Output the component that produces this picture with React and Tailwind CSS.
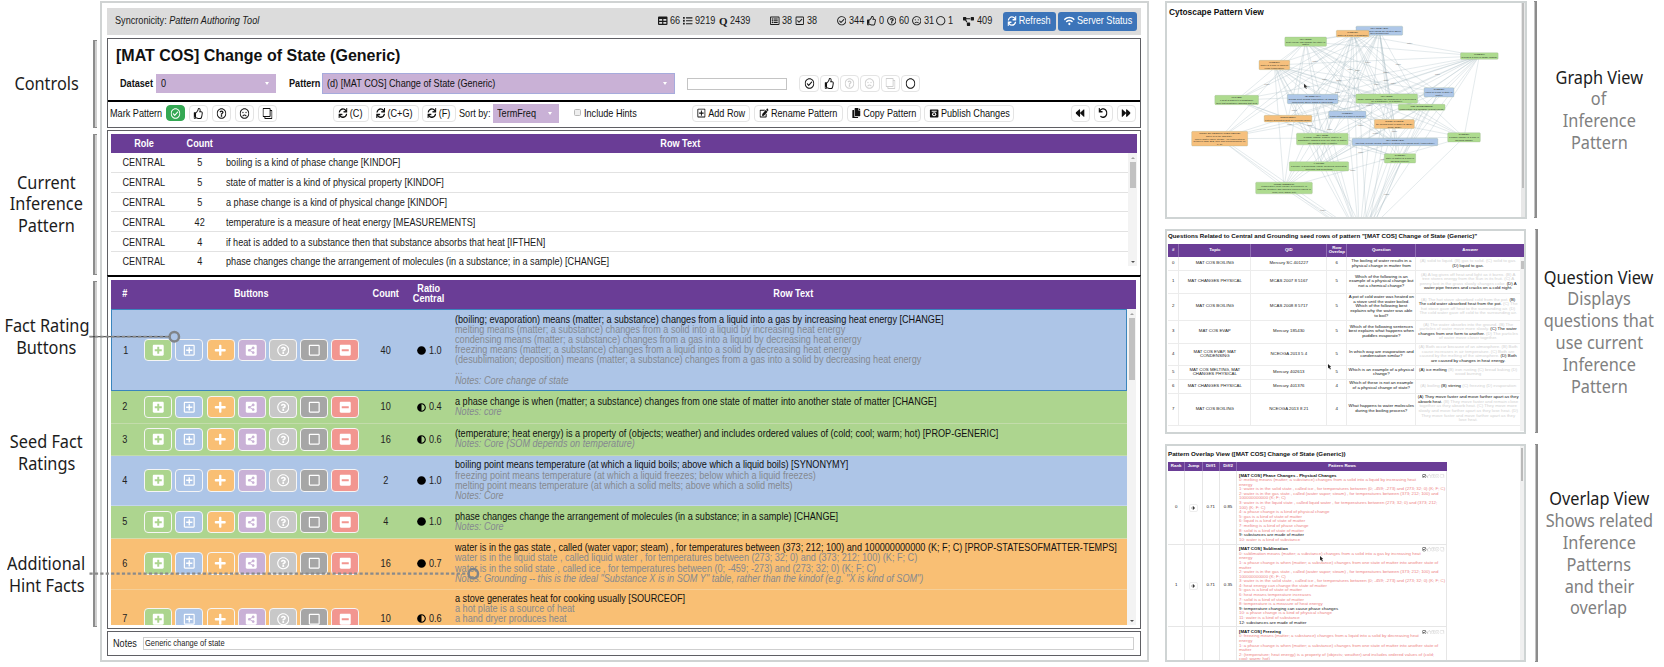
import React from "react";
import {
  FaTable, FaList, FaRegListAlt, FaRegCheckSquare, FaRegCheckCircle, FaRegThumbsUp,
  FaRegQuestionCircle, FaRegFrown, FaRegCircle, FaProjectDiagram, FaSync, FaWifi, FaRegClone,
  FaRegPlusSquare, FaEdit, FaCopy, FaBackward, FaUndo, FaForward, FaPlusSquare, FaPlus,
  FaShareAltSquare, FaRegSquare, FaMinusSquare, FaCircle, FaAdjust, FaArrowRight,
} from "react-icons/fa";

const Clone = () => <FaRegClone className="-scale-x-100" />;

/* condensed text, anchored left (L) or centred (M) */
const L = ({ className = "", children }) => (
  <span className={"inline-block shrink-0 origin-left scale-x-[0.895] whitespace-nowrap " + className}>{children}</span>
);
const M = ({ children }) => (
  <span className="inline-flex shrink-0 origin-center scale-x-[0.895] items-center justify-center gap-[2.5px] whitespace-nowrap">{children}</span>
);

function PublishIcon() {
  return (
    <svg width="10" height="9" viewBox="0 0 18 18" preserveAspectRatio="none">
      <rect x="0" y="1" width="18" height="16" rx="2" fill="#111" />
      <rect x="4" y="3.5" width="10" height="2" fill="#fff" />
      <circle cx="9" cy="10.5" r="4.2" fill="#fff" />
      <circle cx="9" cy="10.5" r="2.2" fill="#111" />
    </svg>
  );
}

/* ---------- side labels ---------- */
function Label({ lines, className = "", light = 99 }) {
  return (
    <div className={"flex flex-col items-center text-[18px] leading-[21.8px] whitespace-nowrap font-['Noto_Sans',sans-serif] " + className}>
      {lines.map((l, i) => (
        <span key={i} className={"origin-center scale-x-[0.905] " + (i >= light ? "text-[#808080]" : "text-[#1c1c1c]")}>{l}</span>
      ))}
    </div>
  );
}

/* ---------- header ---------- */
function Stat({ icon, children, className = "" }) {
  return (
    <span className={"flex items-center gap-[2.5px] shrink-0 " + className}>
      {icon}
      <L>{children}</L>
    </span>
  );
}

function Header() {
  return (
    <div className="flex h-[27px] items-center bg-[#dcdcdc] pl-[8px] pr-[4px] text-[10.2px] text-[#1a1a1a]">
      <span className="w-[543px] shrink-0"><L>Syncronicity: <i>Pattern Authoring Tool</i></L></span>
      <Stat className="w-[25px]" icon={<FaTable className="size-[9.5px]" />}>66</Stat>
      <Stat className="w-[35.5px]" icon={<FaList className="size-[9.5px]" />}>9219</Stat>
      <Stat className="w-[51.5px]" icon={<b className="font-['Liberation_Serif',serif] text-[11px] leading-none">Q</b>}>2439</Stat>
      <Stat className="w-[25px]" icon={<FaRegListAlt className="size-[9.5px]" />}>38</Stat>
      <Stat className="w-[41.5px]" icon={<FaRegCheckSquare className="size-[9.5px]" />}>38</Stat>
      <Stat className="w-[30px]" icon={<FaRegCheckCircle className="size-[9.5px]" />}>344</Stat>
      <Stat className="w-[20px]" icon={<FaRegThumbsUp className="size-[9.5px]" />}>0</Stat>
      <Stat className="w-[25px]" icon={<FaRegQuestionCircle className="size-[9.5px]" />}>60</Stat>
      <Stat className="w-[24.5px]" icon={<FaRegFrown className="size-[9.5px]" />}>31</Stat>
      <Stat className="w-[27px]" icon={<FaRegCircle className="size-[9.5px]" />}>1</Stat>
      <Stat className="w-[39.5px]" icon={<FaProjectDiagram className="size-[11px]" />}>409</Stat>
      <span className="flex h-[19px] w-[53px] shrink-0 items-center justify-center rounded-[3px] bg-[#3c74b9] text-white">
        <M><FaSync className="size-[10px]" />Refresh</M>
      </span>
      <span className="ml-[2.5px] flex h-[19px] w-[78.5px] shrink-0 items-center justify-center rounded-[3px] bg-[#3c74b9] text-white">
        <M><FaWifi className="size-[12px]" />Server Status</M>
      </span>
    </div>
  );
}

/* ---------- controls ---------- */
function Btn({ className = "", children }) {
  return (
    <span className={"flex shrink-0 items-center justify-center rounded-[4px] border border-[#e4e4e4] " + className}>
      <M>{children}</M>
    </span>
  );
}

function Select({ children, className = "" }) {
  return (
    <span className={"flex shrink-0 items-center justify-between bg-[#c9b1d6] " + className}>
      <L>{children}</L>
      <span className="size-0 border-x-[2px] border-t-[3.5px] border-x-transparent border-t-white" />
    </span>
  );
}

function Controls() {
  return (
    <div className="mt-[3px] h-[90px] border border-[#5f5f64] text-[10.2px] text-[#111]">
      <div className="flex h-[34.5px] items-center pl-[8px] text-[17px] font-bold">
        <span className="origin-left scale-x-[0.942]">[MAT COS] Change of State (Generic)</span>
      </div>
      <div className="flex h-[21px] items-center pl-[12px]">
        <b className="w-[36px] shrink-0"><L>Dataset</L></b>
        <Select className="h-[19px] w-[120px] pl-[4.5px] pr-[7px]">0</Select>
        <b className="ml-[12.5px] w-[33.5px] shrink-0"><L>Pattern</L></b>
        <Select className="h-[20.5px] w-[353px] border border-[#a6abdc] pl-[4px] pr-[7.5px]">(d) [MAT COS] Change of State (Generic)</Select>
        <span className="ml-[11.5px] mr-[12.5px] h-[12px] w-[100px] shrink-0 border border-[#c4c4c4]" />
        <span className="flex gap-[1px] text-[11px]">
          <Btn className="h-[17px] w-[19.3px]"><FaRegCheckCircle /></Btn>
          <Btn className="h-[17px] w-[19.3px]"><FaRegThumbsUp /></Btn>
          <Btn className="h-[17px] w-[19.3px] text-[#cfcfcf]"><FaRegQuestionCircle /></Btn>
          <Btn className="h-[17px] w-[19.3px] text-[#cfcfcf]"><FaRegFrown /></Btn>
          <Btn className="h-[17px] w-[19.3px] text-[#cfcfcf]"><Clone /></Btn>
          <Btn className="h-[17px] w-[19.3px]"><FaRegCircle /></Btn>
        </span>
      </div>
      <div className="mt-[5.5px] flex h-[25.5px] items-center border-t-2 border-black pl-[2px]">
        <span className="w-[55.5px] shrink-0"><L>Mark Pattern</L></span>
        <span className="flex shrink-0 gap-[3.2px] text-[11px]">
          <Btn className="h-[16.5px] w-[19.5px] !border-[#34a853] bg-[#34a853] text-white"><FaRegCheckCircle /></Btn>
          <Btn className="h-[17px] w-[19.8px]"><FaRegThumbsUp /></Btn>
          <Btn className="h-[17px] w-[19.8px]"><FaRegQuestionCircle /></Btn>
          <Btn className="h-[17px] w-[19.8px]"><FaRegFrown /></Btn>
          <Btn className="h-[17px] w-[19.8px]"><Clone /></Btn>
        </span>
        <Btn className="ml-[55.5px] h-[17.5px] w-[36px]"><FaSync />(C)</Btn>
        <Btn className="ml-[2px] h-[17.5px] w-[48px]"><FaSync />(C+G)</Btn>
        <Btn className="ml-[3px] h-[17.5px] w-[34px]"><FaSync />(F)</Btn>
        <span className="ml-[3.5px] w-[33.5px] shrink-0"><L>Sort by:</L></span>
        <Select className="h-[19px] w-[66.5px] pl-[4.5px] pr-[7px]">TermFreq</Select>
        <span className="ml-[15px] mb-[2px] size-[7px] shrink-0 rounded-[1.5px] border border-[#b9b9b9] bg-[#eee]" />
        <span className="ml-[2.5px] w-[108px] shrink-0"><L>Include Hints</L></span>
        <Btn className="h-[17.5px] w-[58px]"><FaRegPlusSquare />Add Row</Btn>
        <Btn className="ml-[4px] h-[17.5px] w-[89.5px]"><FaEdit />Rename Pattern</Btn>
        <Btn className="ml-[3.5px] h-[17.5px] w-[74px]"><FaCopy />Copy Pattern</Btn>
        <Btn className="ml-[3.5px] h-[17.5px] w-[90px]"><PublishIcon />Publish Changes</Btn>
        <Btn className="ml-[56.5px] h-[17.5px] w-[19.5px]"><FaBackward /></Btn>
        <Btn className="ml-[3.5px] h-[17.5px] w-[19.5px]"><FaUndo /></Btn>
        <Btn className="ml-[3.5px] h-[17.5px] w-[19.5px]"><FaForward /></Btn>
      </div>
    </div>
  );
}

/* ---------- inference pattern table ---------- */
const patternRows = [
  [5, "boiling is a kind of phase change [KINDOF]"],
  [5, "state of matter is a kind of physical property [KINDOF]"],
  [5, "a phase change is a kind of physical change [KINDOF]"],
  [42, "temperature is a measure of heat energy [MEASUREMENTS]"],
  [4, "if heat is added to a substance then that substance absorbs that heat [IFTHEN]"],
  [4, "phase changes change the arrangement of molecules (in a substance; in a sample) [CHANGE]"],
];

function Scrollbar({ thumb, className = "" }) {
  return (
    <div className={"flex shrink-0 flex-col items-center bg-[#f3f3f3] " + className}>
      <span className="mt-[4px] mb-[3px] border-x-[2px] border-b-[2.5px] border-x-transparent border-b-[#a3a3a3]" />
      <span className={"w-[6px] bg-[#c1c1c1] " + thumb} />
      <span className="mt-auto mb-[3px] border-x-[2px] border-t-[2.5px] border-x-transparent border-t-[#505050]" />
    </div>
  );
}

function PatternTable() {
  return (
    <div className="mt-[2px] h-[145px] border border-b-0 border-[#5f5f64] px-[3px] pt-[3px] text-[10.2px] text-[#1a1a1a]">
      <div className="flex h-[19.5px] w-[1026px] items-center bg-[#6a3d96] text-center font-bold text-white">
        <span className="w-[65px]"><M>Role</M></span>
        <span className="w-[47px]"><M>Count</M></span>
        <span className="flex-1"><M>Row Text</M></span>
      </div>
      <div className="flex h-[113.5px] w-[1026px] overflow-hidden">
        <div className="flex-1">
          {patternRows.map(([c, t], i) => (
            <div key={i} className="flex h-[19.8px] items-center border-b border-[#e2e2e2] pt-[1px]">
              <span className="w-[65px] text-center"><M>CENTRAL</M></span>
              <span className="w-[47px] text-center"><M>{c}</M></span>
              <L className="ml-[3px]">{t}</L>
            </div>
          ))}
        </div>
        <Scrollbar thumb="h-[26px]" className="h-[113px] w-[9px]" />
      </div>
    </div>
  );
}

/* ---------- fact rating table ---------- */
const BLUE = "bg-[#adc5e7]";
const GREEN = "bg-[#add58f]";
const ORANGE = "bg-[#f9bf74]";

const facts = [
  { n: 1, h: "h-[82.3px] border border-[#3a85bd]", bg: BLUE, c: 40, r: "1.0", full: true,
    t: "(boiling; evaporation) means (matter; a substance) changes from a liquid into a gas by increasing heat energy [CHANGE]",
    s: ["melting means (matter; a substance) changes from a solid into a liquid by increasing heat energy",
      "condensing means (matter; a substance) changes from a gas into a liquid by decreasing heat energy",
      "freezing means (matter; a substance) changes from a liquid into a solid by decreasing heat energy",
      "(desublimation; deposition) means (matter; a substance) changes from a gas into a solid by decreasing heat energy",
      "..."],
    note: "Notes: Core change of state" },
  { n: 2, h: "h-[32.4px] border-b border-[#c3dcab]", bg: GREEN, c: 10, r: "0.4",
    t: "a phase change is when (matter; a substance) changes from one state of matter into another state of matter [CHANGE]", s: [], note: "Notes: core" },
  { n: 3, h: "h-[32.3px] border-b border-[#c3dcab]", bg: GREEN, c: 16, r: "0.6",
    t: "(temperature; heat energy) is a property of (objects; weather) and includes ordered values of (cold; cool; warm; hot) [PROP-GENERIC]", s: [], note: "Notes: Core (SOM depends on temperature)" },
  { n: 4, h: "h-[50.3px] border-b border-[#c3d5ee]", bg: BLUE, c: 2, r: "1.0", full: true,
    t: "boiling point means temperature (at which a liquid boils; above which a liquid boils) [SYNONYMY]",
    s: ["freezing point means temperature (at which a liquid freezes; below which a liquid freezes)",
      "melting point means temperature (at which a solid melts; above which a solid melts)"], note: "Notes: Core" },
  { n: 5, h: "h-[32.2px] border-b border-[#d5dcab]", bg: GREEN, c: 4, r: "1.0", full: true,
    t: "phase changes change the arrangement of molecules (in a substance; in a sample) [CHANGE]", s: [], note: "Notes: Core" },
  { n: 6, h: "h-[51px] border-b border-[#f5cf98]", bg: ORANGE, c: 16, r: "0.7", full: true,
    t: "water is in the gas state , called (water vapor; steam) , for temperatures between (373; 212; 100) and 100000000000 (K; F; C) [PROP-STATESOFMATTER-TEMPS]",
    s: ["water is in the liquid state , called liquid water , for temperatures between (273; 32; 0) and (373; 212; 100) (K; F; C)",
      "water is in the solid state , called ice , for temperatures between (0; -459; -273) and (273; 32; 0) (K; F; C)"],
    note: "Notes: Grounding -- this is the ideal \"Substance X is in SOM Y\" table, rather than the kindof (e.g. \"X is kind of SOM\")" },
  { n: 7, h: "h-[58.5px]", bg: ORANGE, c: 10, r: "0.6",
    t: "a stove generates heat for cooking usually [SOURCEOF]",
    s: ["a hot plate is a source of heat", "a hand dryer produces heat"], note: "\u00a0", tail: true },
];

const rateButtons = [
  ["bg-[#acd58e]", FaPlusSquare], ["bg-[#adc5e7]", FaRegPlusSquare], ["bg-[#f9bf74]", FaPlus],
  ["bg-[#c9b1d6]", FaShareAltSquare], ["bg-[#c8c8c8]", FaRegQuestionCircle],
  ["bg-[#a6a6a6]", FaRegSquare], ["bg-[#f29690]", FaMinusSquare],
];

function FactRow({ f }) {
  const Ratio = f.full ? FaCircle : FaAdjust;
  return (
    <div className={"flex items-center " + f.h + " " + f.bg}>
      <span className={(f.n === 1 ? "w-[26px]" : "w-[27px]") + " shrink-0 text-center"}><M>{f.n}</M></span>
      <span className="ml-[6px] flex w-[228px] shrink-0 gap-[3.1px]">
        {rateButtons.map(([bg, Icon], i) => (
          <span key={i} className={"flex h-[22.5px] w-[28px] items-center justify-center rounded-[4px] border border-[#f5f5f5] text-white " + bg}>
            <Icon className="size-[12.5px]" />
          </span>
        ))}
      </span>
      <span className="w-[26px] shrink-0 text-center"><M>{f.c}</M></span>
      <span className="flex w-[57px] shrink-0 items-center gap-[2.5px] pl-[19px]">
        <Ratio className="size-[9px] text-black" /><L>{f.r}</L>
      </span>
      <span className="flex flex-col items-start leading-[10.2px]">
        <L className="text-[#111]">{f.t}</L>
        {f.s.map((s, i) => <L key={i} className="text-[#85898f]">{s}</L>)}
        <L className={"italic text-[#85898f]" + (f.tail ? " pb-[9px]" : "")}>{f.note}</L>
      </span>
    </div>
  );
}

function FactTable() {
  return (
    <div className="h-[354px] border border-t-2 border-[#5f5f64] border-t-black px-[3px] pt-[3px] text-[10.2px] text-[#222]">
      <div className="flex h-[29.5px] w-[1024.5px] items-center bg-[#6a3d96] text-center font-bold leading-[10.2px] text-white">
        <span className="w-[27px]"><M>#</M></span>
        <span className="w-[225px]"><M>Buttons</M></span>
        <span className="w-[44px]"><M>Count</M></span>
        <span className="flex w-[43px] flex-col items-center"><M>Ratio</M><M>Central</M></span>
        <span className="flex-1"><M>Row Text</M></span>
      </div>
      <div className="flex h-[315.5px] w-[1024.5px] overflow-hidden">
        <div className="w-[1016px] shrink-0">
          {facts.map((f) => <FactRow key={f.n} f={f} />)}
        </div>
        <Scrollbar thumb="h-[62px]" className="h-full w-[8.5px]" />
      </div>
    </div>
  );
}

/* ---------- graph ---------- */
const nodes = [
  [658, 91, 140, 27, "b", ["[CHANGE-VEC]", "boiling is when liquids are heated above", "their boiling point"]],
  [578, 100, 98, 20, "o", ["[KINDOF]", "water is a kind of substance"]],
  [437, 124, 125, 28, "g", ["[CHANGE]", "heat energy can change the state of", "matter"]],
  [343, 194, 92, 28, "o", ["[KINDOF]", "water is a kind of liquid at", "room temperature"]],
  [958, 167, 113, 20, "g", ["[KINDOF]", "boiling is a kind of phase change"]],
  [230, 299, 131, 28, "g", ["[IFTHEN]", "if heat is added to a substance", "then that substance absorbs that heat"]],
  [458, 296, 152, 28, "b", ["[SYNONYMY]", "boiling point means temperature (at which a", "liquid boils; above which a liquid boils)"]],
  [680, 295, 185, 28, "g", ["[CHANGE]", "phase changes change the arrangement of molecules", "(in a substance; in a sample)"]],
  [837, 276, 90, 28, "b", ["[KINDOF]", "liquid is a kind of state of", "matter"]],
  [785, 321, 140, 18, "g", ["[MEASUREMENTS]", "temperature is a measure of heat energy"]],
  [562, 343, 112, 22, "b", ["[KINDOF]", "temperature is a kind of property"]],
  [384, 355, 143, 20, "o", ["[SOURCEOF]", "a stove generates heat for cooking usually"]],
  [703, 371, 120, 27, "o", ["[PROP-THINGS]", "the boiling point of water is (212F;", "100C; 373K)"]],
  [179, 415, 168, 44, "o", ["[PROP-STATESOFMATTER-TEMPS]", "water is in the gas state ,", "called (water vapor; steam) , for temperatures", "between (373; 212; 100) and 100000000000 (K;", "F; C)"]],
  [487, 416, 155, 35, "g", ["[CHANGE]", "a phase change is when (matter; a", "substance) changes from one state of matter", "into another state of matter"]],
  [705, 425, 257, 22, "b", ["[CHANGE-VEC]", "(melting; boiling) means (matter) heating; decreasing (heat; temperature)"]],
  [912, 411, 98, 28, "g", ["[KINDOF]", "a phase change is a kind of", "physical change"]],
  [720, 474, 94, 28, "g", ["[KINDOF]", "state of matter is a kind of", "physical property"]],
  [477, 498, 178, 28, "g", ["[ACTION]", "a source of something (emits; produces; generates;", "provides) that something"]],
  [372, 563, 170, 35, "g", ["[PROP-GENERIC]", "(temperature; heat energy) is a property of", "(objects; weather) and includes ordered values of", "(cold; cool; warm; hot)"]],
];
const fills = { b: "#aec7e8", o: "#f6c07d", g: "#aedb8f" };
const edges = [];
nodes.forEach((a, i) => {
  nodes.forEach((b, j) => {
    if (j > i && ((i * 7 + j * 5) % 3 === 0 || (i < 5 && (i + j) % 4 !== 0))) edges.push([a[0], a[1], b[0], b[1]]);
  });
  if (i !== 5 && i !== 11) {
    edges.push([a[0], a[1], 598, 716]);
    if (i % 2) edges.push([a[0] + 8, a[1], 622, 716]);
  }
});

function Graph() {
  return (
    <svg width="358" height="196" viewBox="21 62 1074 588">
      {edges.map(([x1, y1, x2, y2], i) => <line key={i} x1={x1} y1={y1} x2={x2} y2={y2} stroke="#9fb3bd" strokeWidth="1.1" opacity="0.75" />)}
      {edges.map(([x1, y1, x2, y2], i) => i % 3 === 0 && (
        <text key={i} x={x1 * 0.55 + x2 * 0.45} y={y1 * 0.55 + y2 * 0.45} fontSize="5.5" fill="#777" textAnchor="middle">matter</text>
      ))}
      {nodes.map(([x, y, w, h, c, t], i) => (
        <g key={i}>
          <rect x={x - w / 2} y={y - h / 2} width={w} height={h} rx="3" fill={fills[c]} stroke="#8fa88a" strokeWidth="0.8" />
          {t.map((l, k) => (
            <text key={k} x={x} y={y + 2.6 + (k - (t.length - 1) / 2) * 8.2} fontSize="7.4" fill="#1f2b1f" textAnchor="middle">{l}</text>
          ))}
        </g>
      ))}
      <path d="M432 250 l0 13 l3 -3 l3 6 l2 -1 l-2 -6 l4 0 z" fill="#333" />
    </svg>
  );
}

/* ---------- questions ---------- */
const questions = [
  ["h-[13.7px]", "MAT COS BOILING", "Mercury SC 401227", 6, "The boiling of water results in a physical change in matter from", "(A) solid to liquid. (B) gas to solid. (C) solid to gas. ", "(D) liquid to gas.", ""],
  ["h-[22.7px]", "MAT CHANGES PHYSICAL", "MCAS 2007 8 5167", 5, "Which of the following is an example of a physical change but not a chemical change?", "(A) A log gives off heat and light as it burns. (B) A tree stores energy from the Sun in its fruit. (C) A penny lost in the grass slowly changes color. ", "(D) A water pipe freezes and cracks on a cold night.", ""],
  ["h-[27.3px]", "MAT COS BOILING", "MCAS 2008 8 5717", 5, "A pot of cold water was heated on a stove until the water boiled. Which of the following best explains why the water was able to boil?", "(A) The hot stove absorbed cold from the pot. ", "(B) The cold water absorbed heat from the pot. ", "(C) The hot stove gave off heat to the surrounding air. (D) The cold water gave off cold to the surrounding air."],
  ["h-[22.7px]", "MAT COS EVAP", "Mercury 185430", 5, "Which of the following sentences best explains what happens when puddles evaporate?", "(A) The water absorbs into the ground. (B) The particles of water move more slowly. ", "(C) The water changes from one form to another. ", "(D) The particles of water move closer together."],
  ["h-[22.7px]", "MAT COS EVAP, MAT CONDENSING", "NCEOGA 2013 5 4", 5, "In which way are evaporation and condensation similar?", "(A) Both occur because of an atmosphere. (B) Both cause increases in air temperature. (C) Both are caused by the melting of the atmosphere. ", "(D) Both are caused by changes in heat energy.", ""],
  ["h-[13.3px]", "MAT COS MELTING, MAT CHANGES PHYSICAL", "Mercury 402613", 5, "Which is an example of a physical change?", "", "(A) ice melting ", "(B) iron rusting (C) bread baking (D) wood burning"],
  ["h-[14px]", "MAT CHANGES PHYSICAL", "Mercury 401376", 4, "Which of these is not an example of a physical change of state?", "(A) boiling ", "(B) stirring ", "(C) freezing (D) evaporation"],
  ["h-[32px]", "MAT COS BOILING", "NCEOGA 2013 8 21", 4, "What happens to water molecules during the boiling process?", "", "(A) They move faster and move farther apart as they absorb heat. ", "(B) They move faster and remain close together as they absorb heat. (C) They move more slowly and move farther apart as they lose heat. (D) They move faster and move farther apart as they lose heat."],
];

function QuestionView() {
  const head = "flex shrink-0 items-center justify-center border-r border-[#8f6db3]";
  const cell = "flex shrink-0 items-center justify-center border-r border-[#ececec]";
  return (
    <div className="h-[205px] w-[361px] overflow-hidden border-2 border-[#cfd4d4] pl-[1px] text-[4.35px] leading-[4.56px] text-[#222]">
      <div className="flex h-[12.5px] items-center pb-[2px] text-[6.17px] font-bold whitespace-nowrap text-[#111]">
        Questions Related to Central and Grounding seed rows of pattern "[MAT COS] Change of State (Generic)"
      </div>
      <div className="flex h-[13.7px] w-[356px] bg-[#6a3d96] text-center font-bold text-white">
        <span className={head + " w-[11.3px]"}>#</span>
        <span className={head + " w-[72px]"}>Topic</span>
        <span className={head + " w-[76px]"}>QID</span>
        <span className={head + " w-[20px]"}>Row<br />Overlap</span>
        <span className={head + " w-[69px]"}>Question</span>
        <span className="flex flex-1 items-center justify-center">Answer</span>
      </div>
      <div className="flex h-[173.8px] w-[356px] overflow-hidden text-center">
        <div className="w-[352px] shrink-0">
          {questions.map(([h, topic, qid, n, q, a, b, c], i) => (
            <div key={i} className={"flex border-b border-[#ececec] " + h}>
              <span className={cell + " w-[11.3px]"}>{i}</span>
              <span className={cell + " w-[72px] px-[6px]"}>{topic}</span>
              <span className={cell + " w-[76px]"}>{qid}</span>
              <span className={cell + " w-[20px]"}>{n}</span>
              <span className={cell + " w-[69px] px-[0.5px] text-[#111]"}>{q}</span>
              <span className="flex flex-1 items-center px-[1px]">
                <span className="w-full text-[#d2d2d2]">{a}<span className="text-[#111]">{b}</span>{c}</span>
              </span>
            </div>
          ))}
        </div>
        <div className="flex flex-1 flex-col items-center bg-[#f3f3f3]"><span className="mt-[4px] h-[8px] w-[3px] bg-[#c1c1c1]" /></div>
      </div>
    </div>
  );
}

/* ---------- overlap ---------- */
const overlaps = [
  ["h-[73.7px]", "0", "0.71", "0.85", "[MAT COS] Phase Changes - Physical Changes", [
    "0: melting means (matter; a substance) changes from a solid into a liquid by increasing heat", "energy",
    "1: water is in the solid state , called ice , for temperatures between (0; -459; -273) and (273; 32; 0) (K; F; C)",
    "2: water is in the gas state , called (water vapor; steam) , for temperatures between (373; 212; 100) and", "100000000000 (K; F; C)",
    "3: water is in the liquid state , called liquid water , for temperatures between (273; 32; 0) and (373; 212;", "100) (K; F; C)",
    "4: a phase change is a kind of physical change", "5: gas is a kind of state of matter", "6: liquid is a kind of state of matter",
    "7: melting is a kind of phase change", "8: solid is a kind of state of matter", "*9: substances are made of matter", "10: water is a kind of substance"]],
  ["h-[82.5px]", "1", "0.71", "0.35", "[MAT COS] Sublimation", [
    "0: sublimation means (matter; a substance) changes from a solid into a gas by increasing heat", "energy",
    "1: a phase change is when (matter; a substance) changes from one state of matter into another state of", "matter",
    "2: water is in the gas state , called (water vapor; steam) , for temperatures between (373; 212; 100) and", "100000000000 (K; F; C)",
    "3: water is in the solid state , called ice , for temperatures between (0; -459; -273) and (273; 32; 0) (K; F; C)",
    "4: heat energy can change the state of matter", "5: gas is a kind of state of matter", "6: heat means temperature increases",
    "7: solid is a kind of state of matter", "8: temperature is a measure of heat energy", "*9: temperature changing can cause phase changes",
    "10: a phase change is a kind of physical change", "11: water is a kind of substance", "*12: substances are made of matter"]],
  ["h-[90px]", "", "", "", "[MAT COS] Freezing", [
    "0: freezing means (matter; a substance) changes from a liquid into a solid by decreasing heat", "energy",
    "1: a phase change is when (matter; a substance) changes from one state of matter into another state of", "matter",
    "2: (temperature; heat energy) is a property of (objects; weather) and includes ordered values of (cold;", "cool; warm; hot)"]],
];

function OverlapView() {
  const cell = "flex shrink-0 items-center justify-center border-r";
  return (
    <div className="flex h-[218px] w-[361px] overflow-hidden border-2 border-[#cfd4d4] pl-[1px] text-[4.37px] leading-[4.58px] text-[#222]">
      <div className="w-[279px] shrink-0">
        <div className="flex h-[16px] items-center text-[6.2px] font-bold whitespace-nowrap text-[#111]">
          Pattern Overlap View ([MAT COS] Change of State (Generic))
        </div>
        <div className="flex h-[9.3px] bg-[#6a3d96] font-bold text-white">
          {["Rank", "Jump", "Diff1", "Diff2"].map((h) => <span key={h} className={cell + " w-[17.3px] border-[#8f6db3]"}>{h}</span>)}
          <span className="flex flex-1 items-center justify-center">Pattern Rows</span>
        </div>
        {overlaps.map(([h, rank, d1, d2, title, rows], i) => (
          <div key={i} className={"flex border-b border-r border-[#e6e6e6] " + h}>
            <span className={cell + " w-[17.3px] border-[#e6e6e6]"}>{rank}</span>
            <span className={cell + " w-[17.3px] border-[#e6e6e6]"}>
              {rank && <span className="flex h-[8px] w-[9px] items-center justify-center rounded-[2px] border border-[#eee]"><FaArrowRight className="size-[4px] text-black" /></span>}
            </span>
            <span className={cell + " w-[17.3px] border-[#e6e6e6]"}>{d1}</span>
            <span className={cell + " w-[17.3px] border-[#e6e6e6]"}>{d2}</span>
            <div className="flex w-[208px] shrink-0 flex-col whitespace-nowrap pt-[2.3px] pl-[1.8px]">
              <div className="flex items-center justify-between pr-[1px] font-bold text-[#111]">
                {title}
                <span className="flex text-[#d0d0d0]"><FaRegCheckCircle className="text-[#222]" /><FaRegThumbsUp /><FaRegQuestionCircle /><FaRegFrown /><Clone /></span>
              </div>
              {rows.map((r, k) => r[0] === "*"
                ? <span key={k} className="text-[#111]">{r.slice(1)}</span>
                : <span key={k} className="text-[#ee8585]">{r}</span>)}
            </div>
          </div>
        ))}
      </div>
      <div className="ml-auto w-[4px] shrink-0 bg-[#f0f0f0] px-[1px] pt-[2px]"><div className="h-[33px] w-full bg-[#b9b9b9]" /></div>
    </div>
  );
}

/* ---------- callouts and pointers over the panels ---------- */
function Callouts() {
  return (
    <svg className="pointer-events-none absolute left-0 top-0" width="1664" height="667">
      <line x1="89.5" x2="169" y1="336.7" y2="336.7" stroke="#333" strokeWidth="1" />
      <line x1="89.5" x2="169" y1="336.7" y2="336.7" stroke="#8a8a8a" strokeWidth="1.8" strokeDasharray="3.2 2.2" />
      <circle cx="174.3" cy="336.7" r="4.7" fill="none" stroke="#808488" strokeWidth="2.5" />
      <line x1="89.5" x2="468" y1="573.7" y2="573.7" stroke="#8a8a8a" strokeWidth="2.2" strokeDasharray="3.2 2.2" />
      <circle cx="473.3" cy="573.7" r="4.7" fill="none" stroke="#808488" strokeWidth="2.5" />
      <path d="M1328 364 v4.5 l1 -1 l1 2 l.8 -.4 l-.8 -2 h1.2 z" fill="#222" />
      <path d="M1320 556 v4.5 l1 -1 l1 2 l.8 -.4 l-.8 -2 h1.2 z" fill="#222" />
    </svg>
  );
}

export default function App() {
  const bar = "w-[3.5px] border-l-2 border-y border-[#8c8c8c] bg-[#d0d0d0]";
  const rbar = "w-[3.5px] border-r-2 border-y border-[#8c8c8c] bg-[#c4c4c4]";
  return (
    <div className="relative flex h-[667px] w-[1664px] overflow-hidden bg-white font-['Liberation_Sans',Arial,sans-serif]">
      <div className="w-[93px] shrink-0 pt-[72.6px]">
        <Label lines={["Controls"]} />
        <Label className="mt-[77.2px]" lines={["Current", "Inference", "Pattern"]} />
        <Label className="mt-[77.8px]" lines={["Fact Rating", "Buttons"]} />
        <Label className="mt-[73px]" lines={["Seed Fact", "Ratings"]} />
        <Label className="mt-[78px]" lines={["Additional", "Hint Facts"]} />
      </div>
      <div className="flex w-[7px] shrink-0 flex-col pt-[40px]">
        <div className={bar + " h-[87.5px]"} />
        <div className={bar + " mt-[6.5px] h-[141px]"} />
        <div className={bar + " mt-[6px] h-[346px]"} />
      </div>
      <div className="mt-[1px] h-[661px] w-[1049px] shrink-0 border-2 border-[#d0d3d3] pl-[5.4px] pt-[4.6px]">
        <div className="flex w-[1034px] flex-col">
          <Header />
          <Controls />
          <PatternTable />
          <FactTable />
          <div className="mt-[2.5px] flex h-[25px] items-center border border-[#5f5f64] pl-[5px] text-[10.2px] text-[#1a1a1a]">
            <span className="w-[30px] shrink-0"><L>Notes</L></span>
            <span className="flex h-[12.5px] w-[991px] items-center border border-[#cfcfcf] pl-[1px] text-[8.4px]"><L>Generic change of state</L></span>
          </div>
        </div>
      </div>
      <div className="ml-[16px] w-[362px] shrink-0 pt-[1px]">
        <div className="flex h-[218px] w-[362px] overflow-hidden border-2 border-[#cfd4d4]">
          <div className="w-[354px] shrink-0 overflow-hidden">
            <div className="flex h-[18px] items-center pl-[2px] text-[8.4px] font-bold text-[#111]">Cytoscape Pattern View</div>
            <Graph />
          </div>
          <div className="ml-auto w-[4px] bg-[#e8e8e8] pl-[1px]"><div className="h-[185px] w-[2px] bg-[#bdbdbd]" /></div>
        </div>
        <div className="mt-[10px]"><QuestionView /></div>
        <div className="mt-[10px]"><OverlapView /></div>
      </div>
      <div className="flex w-[11px] shrink-0 flex-col items-end pt-[1px]">
        <div className={rbar + " mr-[1px] h-[217px]"} />
        <div className={rbar + " mt-[11px] h-[204px]"} />
        <div className={rbar + " mt-[10.5px] h-[218px]"} />
      </div>
      <div className="w-[122px] shrink-0 pt-[66.5px]">
        <Label light={1} lines={["Graph View", "of", "Inference", "Pattern"]} />
        <Label light={1} className="mt-[113px]" lines={["Question View", "Displays", "questions that", "use current", "Inference", "Pattern"]} />
        <Label light={1} className="mt-[91px]" lines={["Overlap View", "Shows related", "Inference", "Patterns", "and their", "overlap"]} />
      </div>
      <Callouts />
    </div>
  );
}
